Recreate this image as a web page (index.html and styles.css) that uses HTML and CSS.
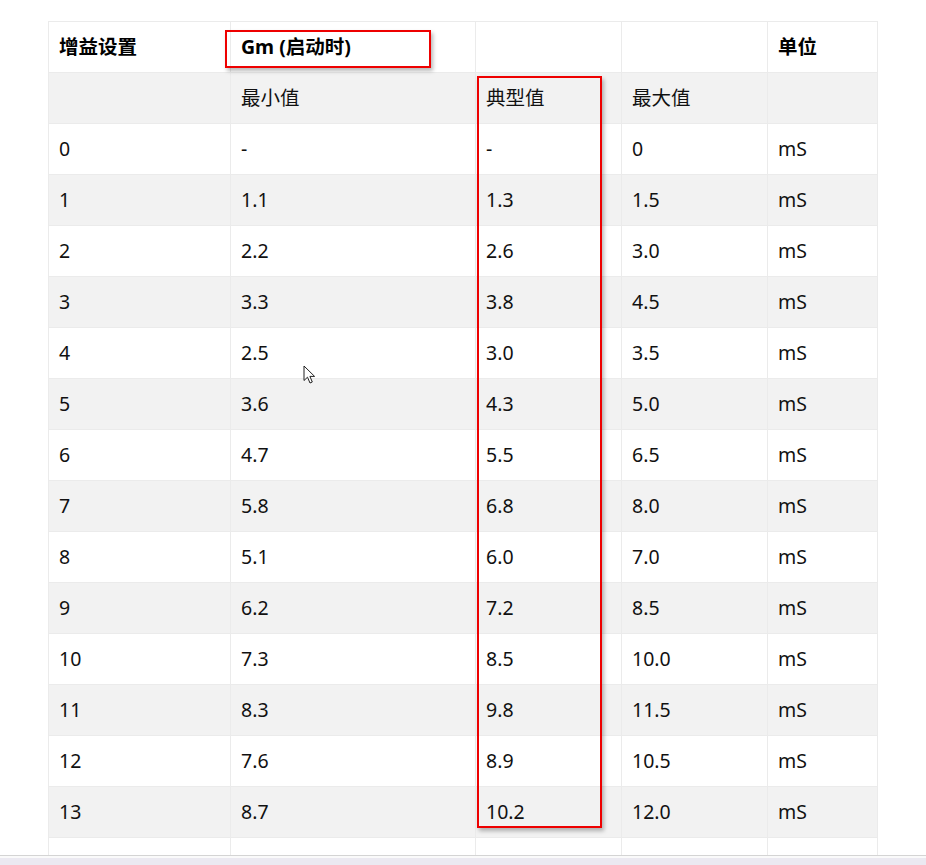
FILE: index.html
```html
<!DOCTYPE html>
<html lang="zh">
<head>
<meta charset="utf-8">
<title>Gm 表</title>
<link rel="stylesheet" href="styles.css">
</head>
<body>
<div class="page">
  <main class="content">
    <table class="gm-table">
      <colgroup>
        <col class="c1"><col class="c2"><col class="c3"><col class="c4"><col class="c5">
      </colgroup>
      <thead>
        <tr class="head">
          <th>增益设置</th><th>Gm (启动时)</th><th></th><th></th><th>单位</th>
        </tr>
      </thead>
      <tbody>
        <tr><td></td><td>最小值</td><td>典型值</td><td>最大值</td><td></td></tr>
        <tr><td>0</td><td>-</td><td>-</td><td>0</td><td>mS</td></tr>
        <tr><td>1</td><td>1.1</td><td>1.3</td><td>1.5</td><td>mS</td></tr>
        <tr><td>2</td><td>2.2</td><td>2.6</td><td>3.0</td><td>mS</td></tr>
        <tr><td>3</td><td>3.3</td><td>3.8</td><td>4.5</td><td>mS</td></tr>
        <tr><td>4</td><td>2.5</td><td>3.0</td><td>3.5</td><td>mS</td></tr>
        <tr><td>5</td><td>3.6</td><td>4.3</td><td>5.0</td><td>mS</td></tr>
        <tr><td>6</td><td>4.7</td><td>5.5</td><td>6.5</td><td>mS</td></tr>
        <tr><td>7</td><td>5.8</td><td>6.8</td><td>8.0</td><td>mS</td></tr>
        <tr><td>8</td><td>5.1</td><td>6.0</td><td>7.0</td><td>mS</td></tr>
        <tr><td>9</td><td>6.2</td><td>7.2</td><td>8.5</td><td>mS</td></tr>
        <tr><td>10</td><td>7.3</td><td>8.5</td><td>10.0</td><td>mS</td></tr>
        <tr><td>11</td><td>8.3</td><td>9.8</td><td>11.5</td><td>mS</td></tr>
        <tr><td>12</td><td>7.6</td><td>8.9</td><td>10.5</td><td>mS</td></tr>
        <tr><td>13</td><td>8.7</td><td>10.2</td><td>12.0</td><td>mS</td></tr>
        <tr><td>&nbsp;</td><td></td><td></td><td></td><td></td></tr>
      </tbody>
    </table>
    <div class="mark mark-head"></div>
    <div class="mark mark-col"></div>
    <svg class="cursor" width="14" height="20" viewBox="0 0 14 20" aria-hidden="true">
      <path d="M1 1 L1 15.5 L4.5 12.2 L7 18 L9.3 17 L6.9 11.4 L11.6 11.4 Z" fill="#fff" stroke="#222" stroke-width="1" stroke-linejoin="round"/>
    </svg>
  </main>
  <footer class="statusbar"></footer>
</div>
</body>
</html>
```

FILE: styles.css
```css
html, body {
  margin: 0;
  padding: 0;
  background: #ffffff;
}

.page {
  width: 926px;
  height: 865px;
  display: flex;
  flex-direction: column;
  overflow: hidden;
}

.content {
  position: relative;
  height: 855px;
  overflow: hidden;
  padding: 21px 0 0 48px;
  box-sizing: border-box;
  font-family: "Noto Sans", "Noto Sans CJK SC", sans-serif;
  font-size: 19.5px;
  color: #111111;
}

.gm-table {
  border-collapse: collapse;
  table-layout: fixed;
  width: 829px;
}

.c1 { width: 182px; }
.c2 { width: 245px; }
.c3 { width: 146px; }
.c4 { width: 146px; }
.c5 { width: 110px; }

.gm-table th,
.gm-table td {
  border: 1px solid #ebebeb;
  height: 51px;
  padding: 0 10px;
  box-sizing: border-box;
  text-align: left;
  vertical-align: middle;
  line-height: 22px;
}

.gm-table th {
  font-weight: 700;
  color: #000;
}

.gm-table tbody tr:nth-child(odd) td {
  background: #f2f2f2;
}

.mark {
  position: absolute;
  border: 2px solid #ee0000;
  box-shadow: 2px 3px 4px rgba(0, 0, 0, 0.28);
  box-sizing: border-box;
}

.mark-head {
  left: 225px;
  top: 30px;
  width: 206px;
  height: 38px;
}

.mark-col {
  left: 477px;
  top: 76px;
  width: 125px;
  height: 752px;
}

.cursor {
  position: absolute;
  left: 303px;
  top: 365px;
}

.statusbar {
  height: 10px;
  border-top: 1px solid #d4d4d4;
  box-sizing: border-box;
  background: linear-gradient(#fafafa 0, #fafafa 2px, #ebe9f1 2px);
}
```
